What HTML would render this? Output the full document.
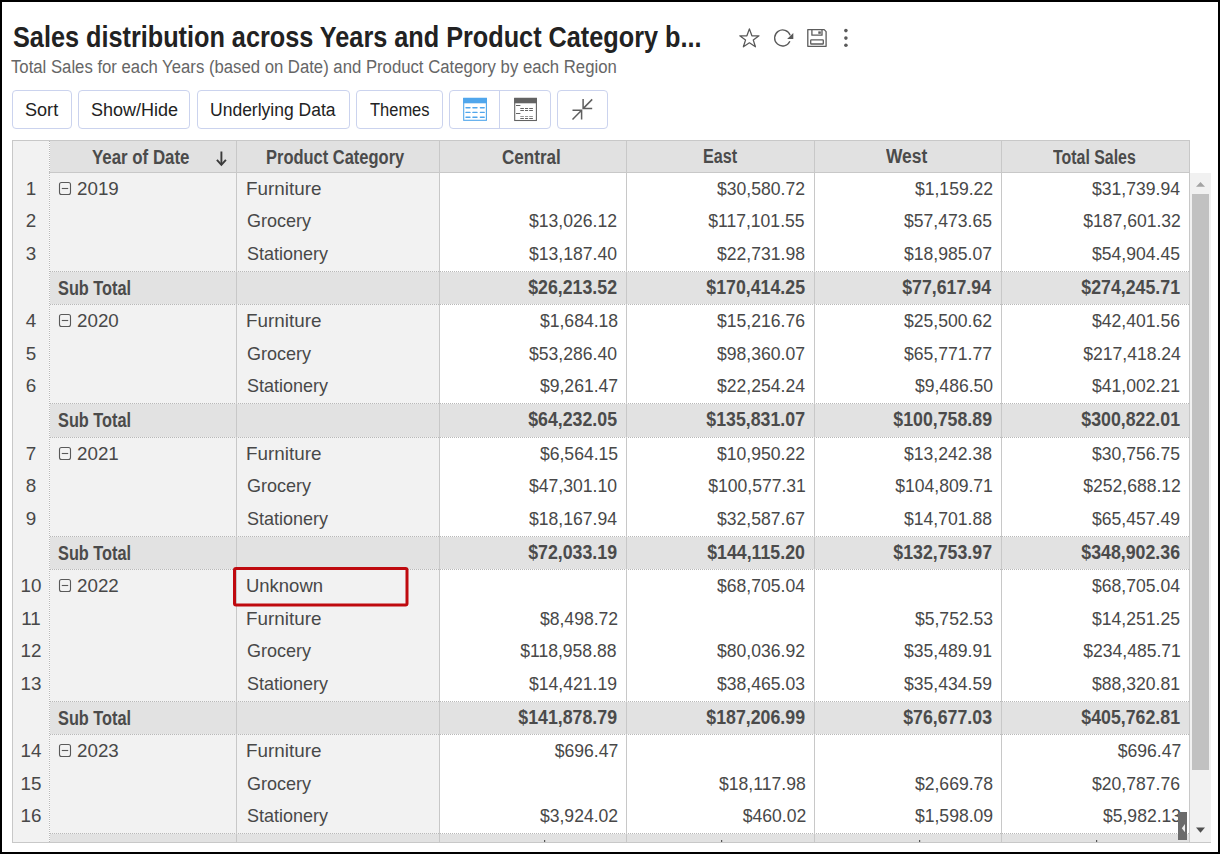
<!DOCTYPE html><html><head><meta charset="utf-8"><style>
*{box-sizing:border-box;margin:0;padding:0}
html,body{width:1220px;height:854px;overflow:hidden;background:#fff}
body{position:relative;font-family:"Liberation Sans",sans-serif;color:#444}
.a{position:absolute}
.t{position:absolute;white-space:nowrap;line-height:1}
</style></head><body>
<div class="a" style="left:12px;top:90px;width:60px;height:39px;border:1px solid #cbd3ee;border-radius:4px;background:#fff"></div>
<div class="a" style="left:78px;top:90px;width:112px;height:39px;border:1px solid #cbd3ee;border-radius:4px;background:#fff"></div>
<div class="a" style="left:197px;top:90px;width:153px;height:39px;border:1px solid #cbd3ee;border-radius:4px;background:#fff"></div>
<div class="a" style="left:356px;top:90px;width:87px;height:39px;border:1px solid #cbd3ee;border-radius:4px;background:#fff"></div>
<div class="a" style="left:449px;top:90px;width:102px;height:39px;border:1px solid #cbd3ee;border-radius:4px;background:#fff"></div>
<div class="a" style="left:557px;top:90px;width:51px;height:39px;border:1px solid #cbd3ee;border-radius:4px;background:#fff"></div>
<div class="a" style="left:499px;top:91px;width:1px;height:37px;background:#cbd3ee"></div>
<div class="a" style="left:12px;top:140px;width:1178px;height:703px;border:1px solid #c8c8c8;border-right:none;background:#fff"></div>
<div class="a" style="left:13px;top:141px;width:36px;height:701px;background:#f2f2f2"></div>
<div class="a" style="left:50px;top:141px;width:1139px;height:31px;background:#e1e1e1"></div>
<div class="a" style="left:50px;top:173px;width:389px;height:669px;background:#f2f2f2"></div>
<div class="a" style="left:49px;top:172px;width:1140px;height:1px;background:#c8c8c8"></div>
<div class="a" style="left:50px;top:272px;width:1139px;height:32px;background:#e2e2e2"></div>
<div class="a" style="left:50px;top:271px;width:1139px;height:1px;border-top:1px dotted #b8b8b8"></div>
<div class="a" style="left:50px;top:304px;width:1139px;height:1px;border-top:1px dotted #b8b8b8"></div>
<div class="a" style="left:50px;top:404px;width:1139px;height:33px;background:#e2e2e2"></div>
<div class="a" style="left:50px;top:403px;width:1139px;height:1px;border-top:1px dotted #b8b8b8"></div>
<div class="a" style="left:50px;top:437px;width:1139px;height:1px;border-top:1px dotted #b8b8b8"></div>
<div class="a" style="left:50px;top:537px;width:1139px;height:32px;background:#e2e2e2"></div>
<div class="a" style="left:50px;top:536px;width:1139px;height:1px;border-top:1px dotted #b8b8b8"></div>
<div class="a" style="left:50px;top:569px;width:1139px;height:1px;border-top:1px dotted #b8b8b8"></div>
<div class="a" style="left:50px;top:702px;width:1139px;height:32px;background:#e2e2e2"></div>
<div class="a" style="left:50px;top:701px;width:1139px;height:1px;border-top:1px dotted #b8b8b8"></div>
<div class="a" style="left:50px;top:734px;width:1139px;height:1px;border-top:1px dotted #b8b8b8"></div>
<div class="a" style="left:50px;top:834px;width:1139px;height:8px;background:#e2e2e2"></div>
<div class="a" style="left:50px;top:833px;width:1139px;height:1px;border-top:1px dotted #b8b8b8"></div>
<div class="a" style="left:236px;top:141px;width:1px;height:701px;background:#c8c8c8"></div>
<div class="a" style="left:439px;top:141px;width:1px;height:701px;background:#c8c8c8"></div>
<div class="a" style="left:626px;top:141px;width:1px;height:701px;background:#c8c8c8"></div>
<div class="a" style="left:814px;top:141px;width:1px;height:701px;background:#c8c8c8"></div>
<div class="a" style="left:1001px;top:141px;width:1px;height:701px;background:#c8c8c8"></div>
<div class="a" style="left:1189px;top:141px;width:1px;height:701px;background:#c8c8c8"></div>
<div class="a" style="left:49px;top:141px;width:1px;height:701px;border-left:1px dotted #b8b8b8"></div>
<div class="a" style="left:1190px;top:173px;width:21px;height:669px;background:#f1f1f1"></div>
<div class="a" style="left:1190px;top:842px;width:21px;height:1px;background:#c8c8c8"></div>
<div class="a" style="left:1192px;top:194px;width:17px;height:576px;background:#c1c1c1"></div>
<div class="t" style="left:13.00px;transform-origin:0 0;top:23.16px;font-size:29px;font-weight:700;color:#222;transform:scaleX(0.8707);">Sales distribution across Years and Product Category b...</div>
<div class="t" style="left:11.30px;transform-origin:0 0;top:58.95px;font-size:17.6px;font-weight:400;color:#666;transform:scaleX(0.9499);">Total Sales for each Years (based on Date) and Product Category by each Region</div>
<div class="t" style="left:25.30px;transform-origin:0 0;top:101.95px;font-size:17.6px;font-weight:400;color:#222;transform:scaleX(1.0277);">Sort</div>
<div class="t" style="left:90.70px;transform-origin:0 0;top:101.95px;font-size:17.6px;font-weight:400;color:#222;transform:scaleX(1.0241);">Show/Hide</div>
<div class="t" style="left:210.30px;transform-origin:0 0;top:101.95px;font-size:17.6px;font-weight:400;color:#222;transform:scaleX(0.9954);">Underlying Data</div>
<div class="t" style="left:370.30px;transform-origin:0 0;top:101.95px;font-size:17.6px;font-weight:400;color:#222;transform:scaleX(0.9365);">Themes</div>
<div class="t" style="left:92.30px;transform-origin:0 0;top:147.63px;font-size:19.6px;font-weight:700;color:#4b4b4b;transform:scaleX(0.8605);">Year of Date</div>
<div class="t" style="left:266.40px;transform-origin:0 0;top:147.63px;font-size:19.6px;font-weight:700;color:#4b4b4b;transform:scaleX(0.8407);">Product Category</div>
<div class="t" style="left:501.70px;transform-origin:0 0;top:147.63px;font-size:19.6px;font-weight:700;color:#4b4b4b;transform:scaleX(0.8718);">Central</div>
<div class="t" style="left:702.60px;transform-origin:0 0;top:146.63px;font-size:19.6px;font-weight:700;color:#4b4b4b;transform:scaleX(0.8238);">East</div>
<div class="t" style="left:886.00px;transform-origin:0 0;top:146.63px;font-size:19.6px;font-weight:700;color:#4b4b4b;transform:scaleX(0.8889);">West</div>
<div class="t" style="left:1052.70px;transform-origin:0 0;top:147.63px;font-size:19.6px;font-weight:700;color:#4b4b4b;transform:scaleX(0.8115);">Total Sales</div>
<div class="t" style="left:-69.00px;width:200px;text-align:center;transform-origin:50% 0;top:180.91px;font-size:17.8px;font-weight:400;color:#484848;transform:scaleX(1.0597);">1</div>
<div class="t" style="left:77.40px;transform-origin:0 0;top:180.91px;font-size:17.8px;font-weight:400;color:#484848;transform:scaleX(1.0557);">2019</div>
<div class="t" style="left:245.60px;transform-origin:0 0;top:180.91px;font-size:17.8px;font-weight:400;color:#484848;transform:scaleX(1.0595);">Furniture</div>
<div class="t" style="right:414.60px;transform-origin:100% 0;top:180.91px;font-size:17.8px;font-weight:400;color:#484848;transform:scaleX(0.9881);">$30,580.72</div>
<div class="t" style="right:227.00px;transform-origin:100% 0;top:180.91px;font-size:17.8px;font-weight:400;color:#484848;transform:scaleX(0.9881);">$1,159.22</div>
<div class="t" style="right:39.60px;transform-origin:100% 0;top:180.91px;font-size:17.8px;font-weight:400;color:#484848;transform:scaleX(0.9881);">$31,739.94</div>
<div class="t" style="left:-69.00px;width:200px;text-align:center;transform-origin:50% 0;top:212.91px;font-size:17.8px;font-weight:400;color:#484848;transform:scaleX(1.0597);">2</div>
<div class="t" style="left:246.60px;transform-origin:0 0;top:212.91px;font-size:17.8px;font-weight:400;color:#484848;transform:scaleX(1.0132);">Grocery</div>
<div class="t" style="right:602.60px;transform-origin:100% 0;top:212.91px;font-size:17.8px;font-weight:400;color:#484848;transform:scaleX(0.9881);">$13,026.12</div>
<div class="t" style="right:415.00px;transform-origin:100% 0;top:212.91px;font-size:17.8px;font-weight:400;color:#484848;transform:scaleX(0.9881);">$117,101.55</div>
<div class="t" style="right:227.60px;transform-origin:100% 0;top:212.91px;font-size:17.8px;font-weight:400;color:#484848;transform:scaleX(0.9881);">$57,473.65</div>
<div class="t" style="right:39.60px;transform-origin:100% 0;top:212.91px;font-size:17.8px;font-weight:400;color:#484848;transform:scaleX(0.9881);">$187,601.32</div>
<div class="t" style="left:-69.00px;width:200px;text-align:center;transform-origin:50% 0;top:245.91px;font-size:17.8px;font-weight:400;color:#484848;transform:scaleX(1.0597);">3</div>
<div class="t" style="left:246.60px;transform-origin:0 0;top:245.91px;font-size:17.8px;font-weight:400;color:#484848;transform:scaleX(1.0113);">Stationery</div>
<div class="t" style="right:602.60px;transform-origin:100% 0;top:245.91px;font-size:17.8px;font-weight:400;color:#484848;transform:scaleX(0.9881);">$13,187.40</div>
<div class="t" style="right:414.60px;transform-origin:100% 0;top:245.91px;font-size:17.8px;font-weight:400;color:#484848;transform:scaleX(0.9881);">$22,731.98</div>
<div class="t" style="right:227.60px;transform-origin:100% 0;top:245.91px;font-size:17.8px;font-weight:400;color:#484848;transform:scaleX(0.9881);">$18,985.07</div>
<div class="t" style="right:39.60px;transform-origin:100% 0;top:245.91px;font-size:17.8px;font-weight:400;color:#484848;transform:scaleX(0.9881);">$54,904.45</div>
<div class="t" style="left:58.00px;transform-origin:0 0;top:278.60px;font-size:19.8px;font-weight:700;color:#4b4b4b;transform:scaleX(0.8251);">Sub Total</div>
<div class="t" style="right:602.60px;transform-origin:100% 0;top:277.60px;font-size:19.8px;font-weight:700;color:#4b4b4b;transform:scaleX(0.8973);">$26,213.52</div>
<div class="t" style="right:414.60px;transform-origin:100% 0;top:277.60px;font-size:19.8px;font-weight:700;color:#4b4b4b;transform:scaleX(0.8973);">$170,414.25</div>
<div class="t" style="right:228.60px;transform-origin:100% 0;top:277.60px;font-size:19.8px;font-weight:700;color:#4b4b4b;transform:scaleX(0.8973);">$77,617.94</div>
<div class="t" style="right:39.60px;transform-origin:100% 0;top:277.60px;font-size:19.8px;font-weight:700;color:#4b4b4b;transform:scaleX(0.8973);">$274,245.71</div>
<div class="t" style="left:-69.00px;width:200px;text-align:center;transform-origin:50% 0;top:312.91px;font-size:17.8px;font-weight:400;color:#484848;transform:scaleX(1.0597);">4</div>
<div class="t" style="left:77.40px;transform-origin:0 0;top:312.91px;font-size:17.8px;font-weight:400;color:#484848;transform:scaleX(1.0557);">2020</div>
<div class="t" style="left:245.60px;transform-origin:0 0;top:312.91px;font-size:17.8px;font-weight:400;color:#484848;transform:scaleX(1.0595);">Furniture</div>
<div class="t" style="right:602.00px;transform-origin:100% 0;top:312.91px;font-size:17.8px;font-weight:400;color:#484848;transform:scaleX(0.9881);">$1,684.18</div>
<div class="t" style="right:414.60px;transform-origin:100% 0;top:312.91px;font-size:17.8px;font-weight:400;color:#484848;transform:scaleX(0.9881);">$15,216.76</div>
<div class="t" style="right:227.60px;transform-origin:100% 0;top:312.91px;font-size:17.8px;font-weight:400;color:#484848;transform:scaleX(0.9881);">$25,500.62</div>
<div class="t" style="right:39.60px;transform-origin:100% 0;top:312.91px;font-size:17.8px;font-weight:400;color:#484848;transform:scaleX(0.9881);">$42,401.56</div>
<div class="t" style="left:-69.00px;width:200px;text-align:center;transform-origin:50% 0;top:345.91px;font-size:17.8px;font-weight:400;color:#484848;transform:scaleX(1.0597);">5</div>
<div class="t" style="left:246.60px;transform-origin:0 0;top:345.91px;font-size:17.8px;font-weight:400;color:#484848;transform:scaleX(1.0132);">Grocery</div>
<div class="t" style="right:602.60px;transform-origin:100% 0;top:345.91px;font-size:17.8px;font-weight:400;color:#484848;transform:scaleX(0.9881);">$53,286.40</div>
<div class="t" style="right:414.60px;transform-origin:100% 0;top:345.91px;font-size:17.8px;font-weight:400;color:#484848;transform:scaleX(0.9881);">$98,360.07</div>
<div class="t" style="right:227.60px;transform-origin:100% 0;top:345.91px;font-size:17.8px;font-weight:400;color:#484848;transform:scaleX(0.9881);">$65,771.77</div>
<div class="t" style="right:39.60px;transform-origin:100% 0;top:345.91px;font-size:17.8px;font-weight:400;color:#484848;transform:scaleX(0.9881);">$217,418.24</div>
<div class="t" style="left:-69.00px;width:200px;text-align:center;transform-origin:50% 0;top:377.91px;font-size:17.8px;font-weight:400;color:#484848;transform:scaleX(1.0597);">6</div>
<div class="t" style="left:246.60px;transform-origin:0 0;top:377.91px;font-size:17.8px;font-weight:400;color:#484848;transform:scaleX(1.0113);">Stationery</div>
<div class="t" style="right:602.00px;transform-origin:100% 0;top:377.91px;font-size:17.8px;font-weight:400;color:#484848;transform:scaleX(0.9881);">$9,261.47</div>
<div class="t" style="right:414.60px;transform-origin:100% 0;top:377.91px;font-size:17.8px;font-weight:400;color:#484848;transform:scaleX(0.9881);">$22,254.24</div>
<div class="t" style="right:227.00px;transform-origin:100% 0;top:377.91px;font-size:17.8px;font-weight:400;color:#484848;transform:scaleX(0.9881);">$9,486.50</div>
<div class="t" style="right:39.60px;transform-origin:100% 0;top:377.91px;font-size:17.8px;font-weight:400;color:#484848;transform:scaleX(0.9881);">$41,002.21</div>
<div class="t" style="left:58.00px;transform-origin:0 0;top:410.60px;font-size:19.8px;font-weight:700;color:#4b4b4b;transform:scaleX(0.8251);">Sub Total</div>
<div class="t" style="right:602.60px;transform-origin:100% 0;top:409.60px;font-size:19.8px;font-weight:700;color:#4b4b4b;transform:scaleX(0.8973);">$64,232.05</div>
<div class="t" style="right:414.60px;transform-origin:100% 0;top:409.60px;font-size:19.8px;font-weight:700;color:#4b4b4b;transform:scaleX(0.8973);">$135,831.07</div>
<div class="t" style="right:227.60px;transform-origin:100% 0;top:409.60px;font-size:19.8px;font-weight:700;color:#4b4b4b;transform:scaleX(0.8973);">$100,758.89</div>
<div class="t" style="right:39.60px;transform-origin:100% 0;top:409.60px;font-size:19.8px;font-weight:700;color:#4b4b4b;transform:scaleX(0.8973);">$300,822.01</div>
<div class="t" style="left:-69.00px;width:200px;text-align:center;transform-origin:50% 0;top:445.91px;font-size:17.8px;font-weight:400;color:#484848;transform:scaleX(1.0597);">7</div>
<div class="t" style="left:77.40px;transform-origin:0 0;top:445.91px;font-size:17.8px;font-weight:400;color:#484848;transform:scaleX(1.0557);">2021</div>
<div class="t" style="left:245.60px;transform-origin:0 0;top:445.91px;font-size:17.8px;font-weight:400;color:#484848;transform:scaleX(1.0595);">Furniture</div>
<div class="t" style="right:602.00px;transform-origin:100% 0;top:445.91px;font-size:17.8px;font-weight:400;color:#484848;transform:scaleX(0.9881);">$6,564.15</div>
<div class="t" style="right:414.60px;transform-origin:100% 0;top:445.91px;font-size:17.8px;font-weight:400;color:#484848;transform:scaleX(0.9881);">$10,950.22</div>
<div class="t" style="right:227.60px;transform-origin:100% 0;top:445.91px;font-size:17.8px;font-weight:400;color:#484848;transform:scaleX(0.9881);">$13,242.38</div>
<div class="t" style="right:39.60px;transform-origin:100% 0;top:445.91px;font-size:17.8px;font-weight:400;color:#484848;transform:scaleX(0.9881);">$30,756.75</div>
<div class="t" style="left:-69.00px;width:200px;text-align:center;transform-origin:50% 0;top:477.91px;font-size:17.8px;font-weight:400;color:#484848;transform:scaleX(1.0597);">8</div>
<div class="t" style="left:246.60px;transform-origin:0 0;top:477.91px;font-size:17.8px;font-weight:400;color:#484848;transform:scaleX(1.0132);">Grocery</div>
<div class="t" style="right:602.60px;transform-origin:100% 0;top:477.91px;font-size:17.8px;font-weight:400;color:#484848;transform:scaleX(0.9881);">$47,301.10</div>
<div class="t" style="right:414.60px;transform-origin:100% 0;top:477.91px;font-size:17.8px;font-weight:400;color:#484848;transform:scaleX(0.9881);">$100,577.31</div>
<div class="t" style="right:227.60px;transform-origin:100% 0;top:477.91px;font-size:17.8px;font-weight:400;color:#484848;transform:scaleX(0.9881);">$104,809.71</div>
<div class="t" style="right:39.60px;transform-origin:100% 0;top:477.91px;font-size:17.8px;font-weight:400;color:#484848;transform:scaleX(0.9881);">$252,688.12</div>
<div class="t" style="left:-69.00px;width:200px;text-align:center;transform-origin:50% 0;top:510.91px;font-size:17.8px;font-weight:400;color:#484848;transform:scaleX(1.0597);">9</div>
<div class="t" style="left:246.60px;transform-origin:0 0;top:510.91px;font-size:17.8px;font-weight:400;color:#484848;transform:scaleX(1.0113);">Stationery</div>
<div class="t" style="right:602.60px;transform-origin:100% 0;top:510.91px;font-size:17.8px;font-weight:400;color:#484848;transform:scaleX(0.9881);">$18,167.94</div>
<div class="t" style="right:414.60px;transform-origin:100% 0;top:510.91px;font-size:17.8px;font-weight:400;color:#484848;transform:scaleX(0.9881);">$32,587.67</div>
<div class="t" style="right:227.60px;transform-origin:100% 0;top:510.91px;font-size:17.8px;font-weight:400;color:#484848;transform:scaleX(0.9881);">$14,701.88</div>
<div class="t" style="right:39.60px;transform-origin:100% 0;top:510.91px;font-size:17.8px;font-weight:400;color:#484848;transform:scaleX(0.9881);">$65,457.49</div>
<div class="t" style="left:58.00px;transform-origin:0 0;top:543.60px;font-size:19.8px;font-weight:700;color:#4b4b4b;transform:scaleX(0.8251);">Sub Total</div>
<div class="t" style="right:602.60px;transform-origin:100% 0;top:542.60px;font-size:19.8px;font-weight:700;color:#4b4b4b;transform:scaleX(0.8973);">$72,033.19</div>
<div class="t" style="right:414.60px;transform-origin:100% 0;top:542.60px;font-size:19.8px;font-weight:700;color:#4b4b4b;transform:scaleX(0.8973);">$144,115.20</div>
<div class="t" style="right:227.60px;transform-origin:100% 0;top:542.60px;font-size:19.8px;font-weight:700;color:#4b4b4b;transform:scaleX(0.8973);">$132,753.97</div>
<div class="t" style="right:39.60px;transform-origin:100% 0;top:542.60px;font-size:19.8px;font-weight:700;color:#4b4b4b;transform:scaleX(0.8973);">$348,902.36</div>
<div class="t" style="left:-69.00px;width:200px;text-align:center;transform-origin:50% 0;top:577.91px;font-size:17.8px;font-weight:400;color:#484848;transform:scaleX(1.0597);">10</div>
<div class="t" style="left:77.40px;transform-origin:0 0;top:577.91px;font-size:17.8px;font-weight:400;color:#484848;transform:scaleX(1.0557);">2022</div>
<div class="t" style="left:245.60px;transform-origin:0 0;top:577.91px;font-size:17.8px;font-weight:400;color:#484848;transform:scaleX(1.0386);">Unknown</div>
<div class="t" style="right:414.60px;transform-origin:100% 0;top:577.91px;font-size:17.8px;font-weight:400;color:#484848;transform:scaleX(0.9881);">$68,705.04</div>
<div class="t" style="right:39.60px;transform-origin:100% 0;top:577.91px;font-size:17.8px;font-weight:400;color:#484848;transform:scaleX(0.9881);">$68,705.04</div>
<div class="t" style="left:-69.00px;width:200px;text-align:center;transform-origin:50% 0;top:610.91px;font-size:17.8px;font-weight:400;color:#484848;transform:scaleX(1.0597);">11</div>
<div class="t" style="left:245.60px;transform-origin:0 0;top:610.91px;font-size:17.8px;font-weight:400;color:#484848;transform:scaleX(1.0595);">Furniture</div>
<div class="t" style="right:602.00px;transform-origin:100% 0;top:610.91px;font-size:17.8px;font-weight:400;color:#484848;transform:scaleX(0.9881);">$8,498.72</div>
<div class="t" style="right:227.00px;transform-origin:100% 0;top:610.91px;font-size:17.8px;font-weight:400;color:#484848;transform:scaleX(0.9881);">$5,752.53</div>
<div class="t" style="right:39.60px;transform-origin:100% 0;top:610.91px;font-size:17.8px;font-weight:400;color:#484848;transform:scaleX(0.9881);">$14,251.25</div>
<div class="t" style="left:-69.00px;width:200px;text-align:center;transform-origin:50% 0;top:642.91px;font-size:17.8px;font-weight:400;color:#484848;transform:scaleX(1.0597);">12</div>
<div class="t" style="left:246.60px;transform-origin:0 0;top:642.91px;font-size:17.8px;font-weight:400;color:#484848;transform:scaleX(1.0132);">Grocery</div>
<div class="t" style="right:603.00px;transform-origin:100% 0;top:642.91px;font-size:17.8px;font-weight:400;color:#484848;transform:scaleX(0.9881);">$118,958.88</div>
<div class="t" style="right:414.60px;transform-origin:100% 0;top:642.91px;font-size:17.8px;font-weight:400;color:#484848;transform:scaleX(0.9881);">$80,036.92</div>
<div class="t" style="right:227.60px;transform-origin:100% 0;top:642.91px;font-size:17.8px;font-weight:400;color:#484848;transform:scaleX(0.9881);">$35,489.91</div>
<div class="t" style="right:39.60px;transform-origin:100% 0;top:642.91px;font-size:17.8px;font-weight:400;color:#484848;transform:scaleX(0.9881);">$234,485.71</div>
<div class="t" style="left:-69.00px;width:200px;text-align:center;transform-origin:50% 0;top:675.91px;font-size:17.8px;font-weight:400;color:#484848;transform:scaleX(1.0597);">13</div>
<div class="t" style="left:246.60px;transform-origin:0 0;top:675.91px;font-size:17.8px;font-weight:400;color:#484848;transform:scaleX(1.0113);">Stationery</div>
<div class="t" style="right:602.60px;transform-origin:100% 0;top:675.91px;font-size:17.8px;font-weight:400;color:#484848;transform:scaleX(0.9881);">$14,421.19</div>
<div class="t" style="right:414.60px;transform-origin:100% 0;top:675.91px;font-size:17.8px;font-weight:400;color:#484848;transform:scaleX(0.9881);">$38,465.03</div>
<div class="t" style="right:227.60px;transform-origin:100% 0;top:675.91px;font-size:17.8px;font-weight:400;color:#484848;transform:scaleX(0.9881);">$35,434.59</div>
<div class="t" style="right:39.60px;transform-origin:100% 0;top:675.91px;font-size:17.8px;font-weight:400;color:#484848;transform:scaleX(0.9881);">$88,320.81</div>
<div class="t" style="left:58.00px;transform-origin:0 0;top:708.60px;font-size:19.8px;font-weight:700;color:#4b4b4b;transform:scaleX(0.8251);">Sub Total</div>
<div class="t" style="right:602.60px;transform-origin:100% 0;top:707.60px;font-size:19.8px;font-weight:700;color:#4b4b4b;transform:scaleX(0.8973);">$141,878.79</div>
<div class="t" style="right:414.60px;transform-origin:100% 0;top:707.60px;font-size:19.8px;font-weight:700;color:#4b4b4b;transform:scaleX(0.8973);">$187,206.99</div>
<div class="t" style="right:227.60px;transform-origin:100% 0;top:707.60px;font-size:19.8px;font-weight:700;color:#4b4b4b;transform:scaleX(0.8973);">$76,677.03</div>
<div class="t" style="right:39.60px;transform-origin:100% 0;top:707.60px;font-size:19.8px;font-weight:700;color:#4b4b4b;transform:scaleX(0.8973);">$405,762.81</div>
<div class="t" style="left:-69.00px;width:200px;text-align:center;transform-origin:50% 0;top:742.91px;font-size:17.8px;font-weight:400;color:#484848;transform:scaleX(1.0597);">14</div>
<div class="t" style="left:77.40px;transform-origin:0 0;top:742.91px;font-size:17.8px;font-weight:400;color:#484848;transform:scaleX(1.0557);">2023</div>
<div class="t" style="left:245.60px;transform-origin:0 0;top:742.91px;font-size:17.8px;font-weight:400;color:#484848;transform:scaleX(1.0595);">Furniture</div>
<div class="t" style="right:602.00px;transform-origin:100% 0;top:742.91px;font-size:17.8px;font-weight:400;color:#484848;transform:scaleX(0.9881);">$696.47</div>
<div class="t" style="right:39.00px;transform-origin:100% 0;top:742.91px;font-size:17.8px;font-weight:400;color:#484848;transform:scaleX(0.9881);">$696.47</div>
<div class="t" style="left:-69.00px;width:200px;text-align:center;transform-origin:50% 0;top:775.91px;font-size:17.8px;font-weight:400;color:#484848;transform:scaleX(1.0597);">15</div>
<div class="t" style="left:246.60px;transform-origin:0 0;top:775.91px;font-size:17.8px;font-weight:400;color:#484848;transform:scaleX(1.0132);">Grocery</div>
<div class="t" style="right:414.40px;transform-origin:100% 0;top:775.91px;font-size:17.8px;font-weight:400;color:#484848;transform:scaleX(0.9881);">$18,117.98</div>
<div class="t" style="right:227.00px;transform-origin:100% 0;top:775.91px;font-size:17.8px;font-weight:400;color:#484848;transform:scaleX(0.9881);">$2,669.78</div>
<div class="t" style="right:39.60px;transform-origin:100% 0;top:775.91px;font-size:17.8px;font-weight:400;color:#484848;transform:scaleX(0.9881);">$20,787.76</div>
<div class="t" style="left:-69.00px;width:200px;text-align:center;transform-origin:50% 0;top:807.91px;font-size:17.8px;font-weight:400;color:#484848;transform:scaleX(1.0597);">16</div>
<div class="t" style="left:246.60px;transform-origin:0 0;top:807.91px;font-size:17.8px;font-weight:400;color:#484848;transform:scaleX(1.0113);">Stationery</div>
<div class="t" style="right:602.00px;transform-origin:100% 0;top:807.91px;font-size:17.8px;font-weight:400;color:#484848;transform:scaleX(0.9881);">$3,924.02</div>
<div class="t" style="right:414.00px;transform-origin:100% 0;top:807.91px;font-size:17.8px;font-weight:400;color:#484848;transform:scaleX(0.9881);">$460.02</div>
<div class="t" style="right:227.00px;transform-origin:100% 0;top:807.91px;font-size:17.8px;font-weight:400;color:#484848;transform:scaleX(0.9881);">$1,598.09</div>
<div class="t" style="right:39.00px;transform-origin:100% 0;top:807.91px;font-size:17.8px;font-weight:400;color:#484848;transform:scaleX(0.9881);">$5,982.13</div>
<svg class="a" style="left:0;top:0" width="1220" height="854" viewBox="0 0 1220 854">
<g fill="none" stroke="#595959" stroke-width="1.3" stroke-linejoin="round">
<path d="M749.4 28.9 L751.9 35.8 L759.0 35.8 L753.3 40.1 L755.4 46.8 L749.4 42.8 L743.4 46.8 L745.5 40.1 L739.8 35.8 L746.9 35.8 Z"/>
</g>
<path d="M789.9 41.3 A8.0 8.0 0 1 1 790.2 35.4" fill="none" stroke="#595959" stroke-width="1.3"/>
<path d="M793.3 32.9 L793.3 39.1 L787.1 39.1 Z" fill="#595959"/>
<g fill="none" stroke="#5c5c5c" stroke-width="1.3" stroke-linejoin="round">
<path d="M807.8 29.6 H824.2 L826.1 31.6 V46.3 H807.8 Z"/>
<path d="M811.9 29.6 V35.2 H822.0 V29.6"/>
<rect x="810.7" y="39.8" width="12.6" height="4.2" rx="0.6"/>
</g>
<rect x="818.3" y="31.4" width="2.5" height="2.4" fill="#5c5c5c"/>
<g fill="#5a5a5a"><circle cx="845.9" cy="30.6" r="1.8"/><circle cx="845.9" cy="38.1" r="1.8"/><circle cx="845.9" cy="45.3" r="1.8"/></g>
<rect x="463.7" y="98.4" width="22.7" height="21.9" fill="none" stroke="#50a6ec" stroke-width="1.1"/>
<rect x="463.2" y="97.9" width="23.7" height="5.4" fill="#50a6ec"/>
<path stroke="#50a6ec" stroke-width="1.4" stroke-linecap="round" d="M466 107.7H470M472.9 107.7H477M480.4 107.7H484.2M466 112.4H470M472.9 112.4H477M480.4 112.4H484.2M466 117.3H470M472.9 117.3H477M480.4 117.3H484.2"/>
<rect x="514.7" y="98.4" width="21.7" height="22.1" fill="none" stroke="#636363" stroke-width="1.1"/>
<rect x="514.2" y="97.9" width="22.7" height="5.4" fill="#636363"/>
<path stroke="#636363" stroke-width="1" d="M516 105.5H520.4M520.3 108.5H523.9M525 108.5H528.1M529.2 108.5H532.9M520.3 110.5H523.9M525 110.5H528.1M529.2 110.5H532.9M516 113.5H520.4M520.3 118.5H523.9M525 118.5H528.1M529.2 118.5H532.9"/>
<path stroke="#9a9a9a" stroke-width="1" d="M520.3 116.5H523.9M525 116.5H528.1M529.2 116.5H532.9"/>
<g fill="none" stroke="#5f5f5f" stroke-width="1.5">
<path d="M583.1 99 V108.6 H592.2 M583.1 108.6 L592.2 99.4"/>
<path d="M572.5 110.3 H581.6 V119.6 M581.6 110.3 L572.5 119.6"/>
</g>
<g fill="none" stroke="#3b3b3b" stroke-width="1.9">
<path d="M221.4 151.5 V164.5"/>
<path d="M216.9 159.8 L221.4 164.9 L225.9 159.8"/>
</g>
<path d="M1196 186.8 L1200.5 182 L1205 186.8 Z" fill="#a3a3a3"/>
<path d="M1196 827.5 L1200.5 832.8 L1205 827.5 Z" fill="#505050"/>
<rect x="1178" y="812" width="9" height="28" fill="#6b6b6b"/>
<path d="M1185 824 L1181.8 828.2 L1185 832.3 Z" fill="#eee"/>
<g fill="#555"><rect x="544" y="840" width="1.2" height="2"/><rect x="721" y="840" width="1.2" height="2"/><rect x="919" y="840" width="1.2" height="2"/><rect x="1096" y="840" width="1.2" height="2"/></g>
<rect x="234.5" y="568.5" width="172.5" height="36.5" rx="1.5" fill="none" stroke="#bf0a0f" stroke-width="3"/>
<rect x="59.5" y="182.5" width="11" height="12" rx="2" fill="none" stroke="#595959" stroke-width="1.1"/><path d="M61.8 188.5H68.2" stroke="#595959" stroke-width="1.1"/>
<rect x="59.5" y="314.5" width="11" height="12" rx="2" fill="none" stroke="#595959" stroke-width="1.1"/><path d="M61.8 320.5H68.2" stroke="#595959" stroke-width="1.1"/>
<rect x="59.5" y="447.5" width="11" height="12" rx="2" fill="none" stroke="#595959" stroke-width="1.1"/><path d="M61.8 453.5H68.2" stroke="#595959" stroke-width="1.1"/>
<rect x="59.5" y="579.5" width="11" height="12" rx="2" fill="none" stroke="#595959" stroke-width="1.1"/><path d="M61.8 585.5H68.2" stroke="#595959" stroke-width="1.1"/>
<rect x="59.5" y="744.5" width="11" height="12" rx="2" fill="none" stroke="#595959" stroke-width="1.1"/><path d="M61.8 750.5H68.2" stroke="#595959" stroke-width="1.1"/>
</svg>
<div class="a" style="left:0;top:0;width:1220px;height:854px;border:2px solid #000"></div>
</body></html>
